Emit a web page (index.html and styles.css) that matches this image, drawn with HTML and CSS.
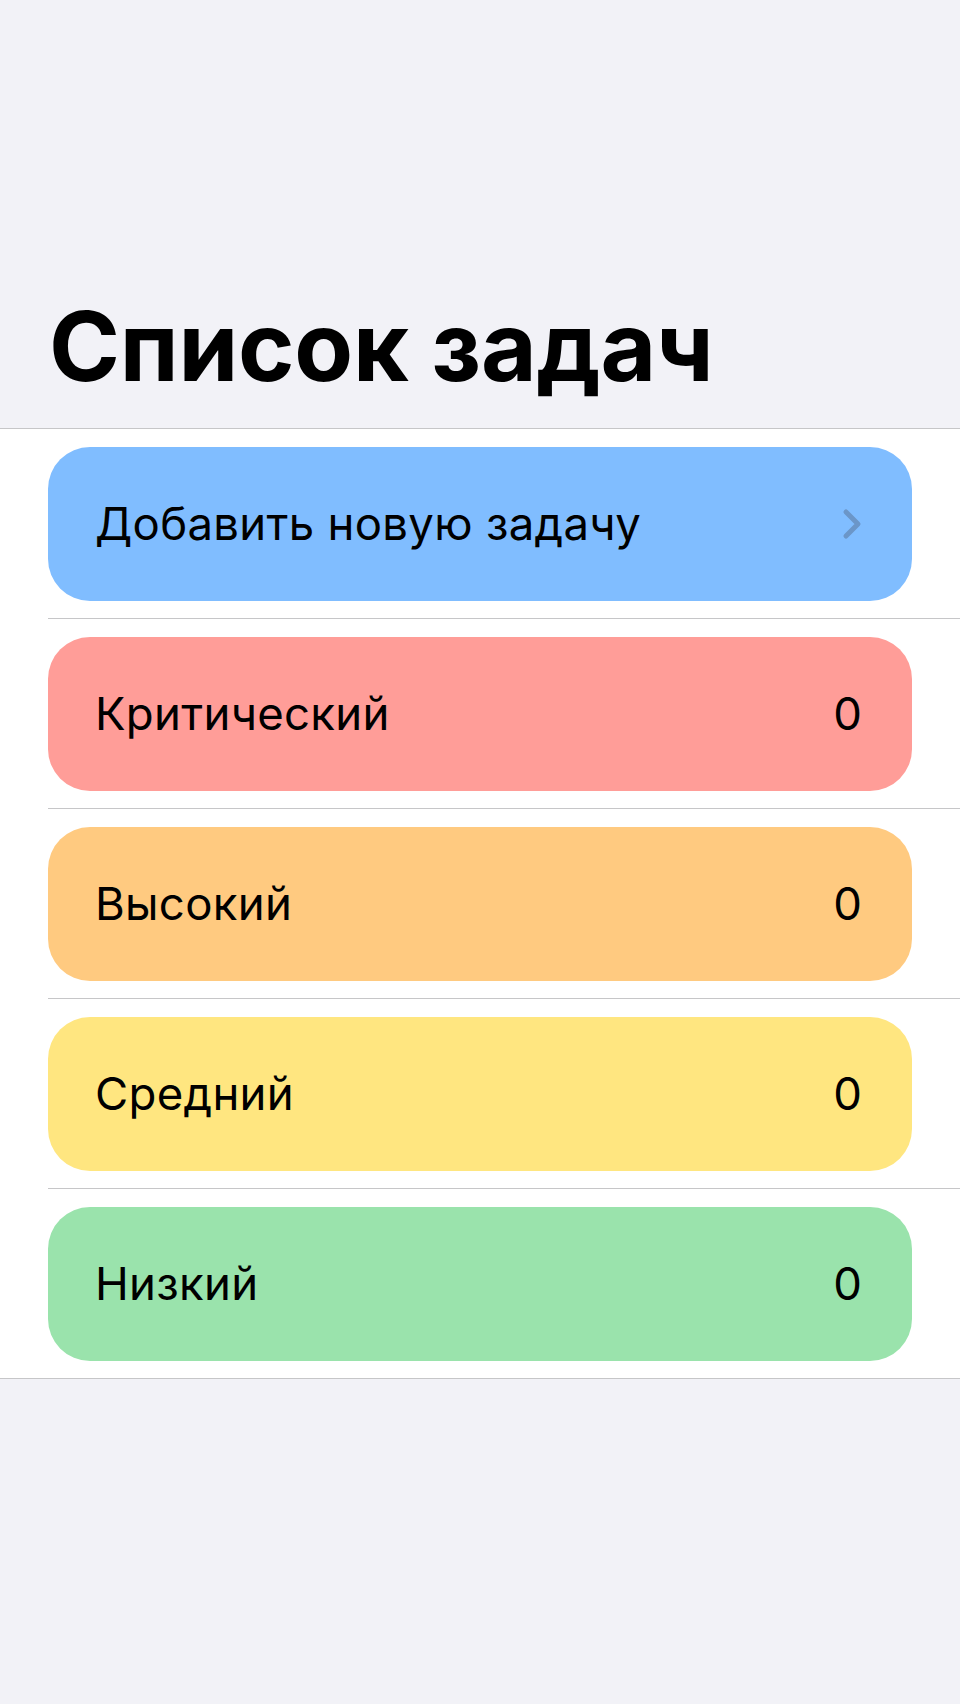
FILE: index.html
```html
<!DOCTYPE html>
<html lang="ru">
<head>
<meta charset="utf-8">
<title>Список задач</title>
<link rel="stylesheet" href="styles.css">
</head>
<body>
<header class="header">
  <h1 class="title">Список задач</h1>
</header>
<ul class="list">
  <li class="row">
    <div class="card card-blue">
      <span class="label">Добавить новую задачу</span>
      <svg class="chevron" width="20" height="32" viewBox="0 0 20 32" aria-hidden="true">
        <path d="M4 4 L16 16 L4 28" fill="none" stroke="#6b96c8" stroke-width="5" stroke-linecap="round" stroke-linejoin="round"/>
      </svg>
    </div>
  </li>
  <li class="row">
    <div class="card card-red">
      <span class="label">Критический</span>
      <span class="count">0</span>
    </div>
  </li>
  <li class="row">
    <div class="card card-orange">
      <span class="label">Высокий</span>
      <span class="count">0</span>
    </div>
  </li>
  <li class="row">
    <div class="card card-yellow">
      <span class="label">Средний</span>
      <span class="count">0</span>
    </div>
  </li>
  <li class="row">
    <div class="card card-green">
      <span class="label">Низкий</span>
      <span class="count">0</span>
    </div>
  </li>
</ul>
</body>
</html>
```
FILE: styles.css
```css
html, body {
  margin: 0;
  padding: 0;
}
body {
  background: #f2f2f7;
  font-family: Inter, "Noto Sans", sans-serif;
  color: #000;
  min-height: 1704px;
}
.header {
  height: 428px;
  box-sizing: border-box;
  display: flex;
  align-items: flex-end;
  padding: 0 0 34px 49px;
}
.title {
  margin: 0;
  font-size: 96px;
  line-height: 1;
  font-weight: 700;
  letter-spacing: -0.2px;
}
.list {
  list-style: none;
  margin: 0;
  padding: 0;
  background: #fff;
  border-top: 1px solid #c6c6c8;
  border-bottom: 1px solid #c6c6c8;
}
.row {
  padding: 18px 48px 17px 48px;
}
.row + .row {
  border-top: 1px solid #c6c6c8;
  margin-left: 48px;
  padding-left: 0;
}
.card {
  height: 154px;
  box-sizing: border-box;
  border-radius: 42px;
  display: flex;
  align-items: center;
  justify-content: space-between;
  padding: 0 50px 0 47px;
}
.label, .count {
  font-size: 45.5px;
  line-height: 1;
  font-weight: 400;
}
.label {
  letter-spacing: 0.3px;
}
.card-blue { background: #80bdff; }
.card-red { background: #ff9d98; }
.card-orange { background: #ffca80; }
.card-yellow { background: #ffe680; }
.card-green { background: #9ae3ac; }
.chevron {
  display: block;
}
```
